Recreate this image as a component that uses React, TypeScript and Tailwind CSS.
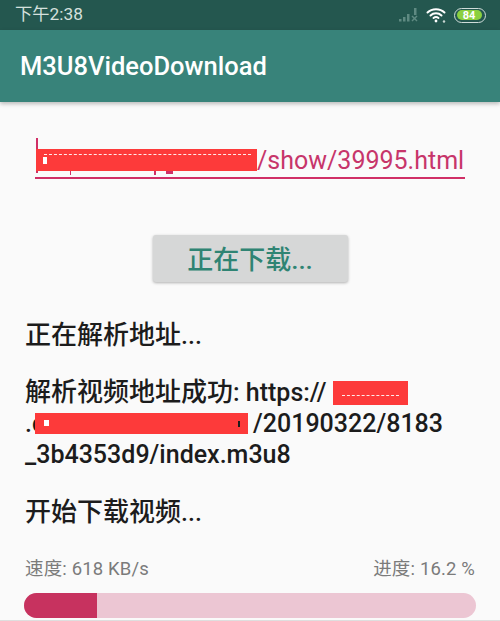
const sans = "font-['Roboto','Noto_Sans_CJK_SC',sans-serif]";

function Redaction({ className, dashes, children }: { className: string; dashes?: string; children?: React.ReactNode }) {
  return (
    <span className={`relative inline-block shrink-0 bg-[#fd3a3a] align-middle ${className}`}>
      {dashes && <span className={`block border-t border-dashed border-white/90 ${dashes}`} />}
      {children}
    </span>
  );
}

function StatusIcons() {
  return (
    <div className="flex items-center gap-[7px]">
      <svg width="20" height="15" viewBox="0 0 20 15" fill="#5f8a82">
        <rect x="0" y="11" width="2.5" height="2.5" />
        <rect x="4" y="9" width="2.5" height="4.5" />
        <rect x="8" y="6" width="2.5" height="7.5" />
        <rect x="15" y="0" width="2.5" height="7" />
        <path d="M12.5 8.5l1-1 2 2 2-2 1 1-2 2 2 2-1 1-2-2-2 2-1-1 2-2z" />
      </svg>
      <svg width="21" height="16" viewBox="0 0 21 16" fill="none" stroke="#fff" strokeWidth="2" strokeLinecap="round">
        <path d="M1.5 5.5C6 1 14 1 18.5 5.5" />
        <path d="M4.5 8.5C7.5 5.6 12.5 5.6 15.5 8.5" />
        <path d="M7.5 11C8.8 10 11.2 10 12.5 11" />
        <circle cx="10" cy="14" r="1.4" fill="#fff" stroke="none" />
        <circle cx="18" cy="14.5" r="1.2" fill="#c9d6d3" stroke="none" />
      </svg>
      <div className="flex h-[15px] w-[32px] items-center rounded-full border-[1.5px] border-[#cfdcd9] p-[1.5px]">
        <div className="flex h-full w-[25px] items-center justify-center rounded-full bg-[#8bd03f] text-[11px] font-bold leading-none text-white">
          84
        </div>
      </div>
    </div>
  );
}

export default function App() {
  return (
    <div className={`flex h-[621px] w-[500px] flex-col overflow-hidden border-b border-[#dedede] bg-[#fafafa] ${sans}`}>
      <div className="flex h-[30px] items-center justify-between bg-[#24574f] pl-[15px] pr-[14px]">
        <span className="text-[17.3px] leading-none text-[#d5e0dd]">下午2:38</span>
        <StatusIcons />
      </div>
      <div className="flex h-[72px] items-center bg-[#38837a] pl-[20px] pt-[2px] shadow-[0_2px_4px_rgba(0,0,0,0.25)]">
        <h1 className="text-[25.5px] font-medium leading-none text-white">M3U8VideoDownload</h1>
      </div>

      <div className="mx-[35px] mt-[41px] flex h-[36px] items-center border-b-2 border-[#d02f66] pr-[1px]">
        <div className="relative flex w-full items-center justify-between">
          <span className="absolute left-[1px] top-[-10px] h-[35px] w-[2px] bg-[#d02f66]" />
          <Redaction className="ml-[1px] h-[22px] w-[221px]" dashes="mt-[5px] ml-[8px] mr-[6px]">
            <span className="absolute left-[7px] top-[8px] h-[7px] w-[4px] bg-white" />
            <span className="absolute left-[34px] top-[22px] h-[4px] w-[1px] bg-[#d02f66]" />
            <span className="absolute left-[118px] top-[22px] h-[4px] w-[2px] bg-[#d02f66]" />
            <span className="absolute left-[130px] top-[22px] h-[3px] w-[7px] bg-[#d02f66]" />
          </Redaction>
          <span className="whitespace-nowrap text-[25px] leading-none text-[#c7356a]">/show/39995.html</span>
        </div>
      </div>

      <div className="mt-[56px] flex justify-center">
        <div className="flex h-[47px] w-[195px] items-center justify-center rounded-[3px] bg-[#d6d7d7] pt-[2px] text-[26px] font-medium leading-none text-[#2f8473] shadow-[0_1px_3px_rgba(0,0,0,0.3)]">
          正在下载...
        </div>
      </div>

      <div className="mt-[38px] px-[25px] text-[25px] font-medium leading-[31px] text-[#1c1c1c]">
        <p>
          <span className="text-[26px]">正在解析地址</span>...
        </p>
        <div className="mt-[26px]">
          <p className="flex items-center whitespace-nowrap">
            <span className="text-[26px]">解析视频地址成功</span>
            <span className="whitespace-pre">: https://</span>
            <Redaction className="ml-[6px] h-[24px] w-[75px]" dashes="mt-[14px] mx-[9px]" />
          </p>
          <p className="flex items-center whitespace-nowrap">
            .c
            <Redaction className="ml-[-10px] mr-[5px] h-[21px] w-[213px]">
              <span className="absolute left-[9px] top-[7px] h-[6px] w-[5px] bg-white" />
              <span className="absolute right-[8px] top-[8px] h-[6px] w-[2px] bg-[#1c1c1c]" />
            </Redaction>
            /20190322/8183
          </p>
          <p>_3b4353d9/index.m3u8</p>
        </div>
        <p className="mt-[27px]">
          <span className="text-[26px]">开始下载视频</span>...
        </p>
      </div>

      <div className="mt-[30px] flex justify-between px-[25px] text-[18.5px] leading-[22px] tracking-[0.15px] text-[#7b7b7b]">
        <span>速度: 618 KB/s</span>
        <span>进度: 16.2 %</span>
      </div>
      <div className="mx-[24px] mt-[13px] h-[25px] shrink-0 overflow-hidden rounded-full bg-[#ecc6d3]">
        <div className="h-full bg-[#c7325f]" style={{ width: "16.2%" }} />
      </div>
    </div>
  );
}
